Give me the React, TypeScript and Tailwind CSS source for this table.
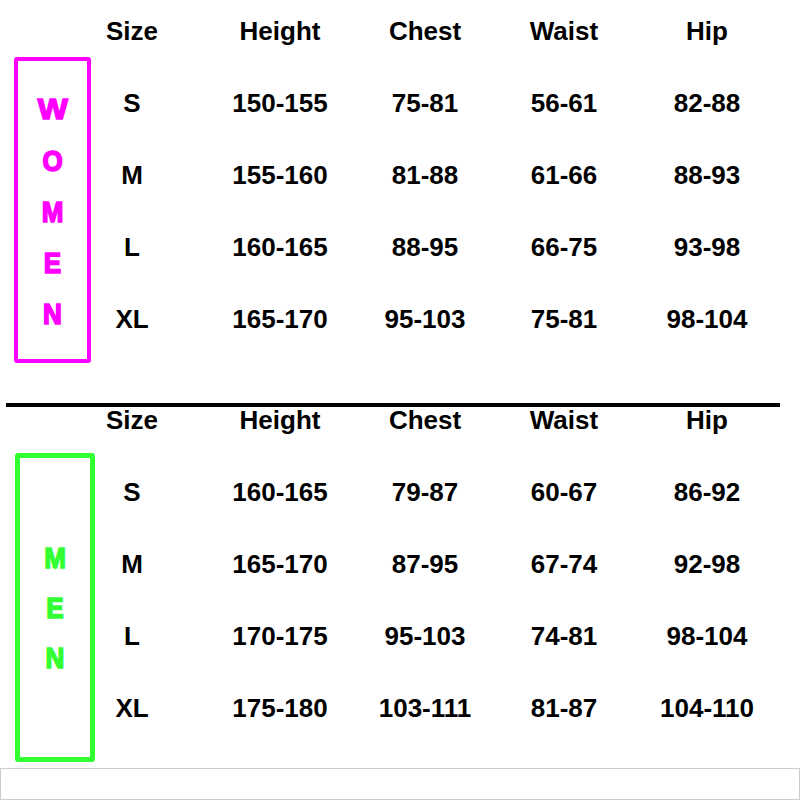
import React from "react";

type Row = [string, string, string, string, string];

const women: Row[] = [
  ["S", "150-155", "75-81", "56-61", "82-88"],
  ["M", "155-160", "81-88", "61-66", "88-93"],
  ["L", "160-165", "88-95", "66-75", "93-98"],
  ["XL", "165-170", "95-103", "75-81", "98-104"],
];

const men: Row[] = [
  ["S", "160-165", "79-87", "60-67", "86-92"],
  ["M", "165-170", "87-95", "67-74", "92-98"],
  ["L", "170-175", "95-103", "74-81", "98-104"],
  ["XL", "175-180", "103-111", "81-87", "104-110"],
];

const header: Row = ["Size", "Height", "Chest", "Waist", "Hip"];

function Cells({ r }: { r: Row }) {
  return (
    <>
      <div className="w-[64px] text-center whitespace-nowrap">{r[0]}</div>
      <div className="ml-[56px] w-[120px] text-center whitespace-nowrap">{r[1]}</div>
      <div className="ml-[25px] w-[120px] text-center whitespace-nowrap">{r[2]}</div>
      <div className="ml-[19px] w-[120px] text-center whitespace-nowrap">{r[3]}</div>
      <div className="ml-[23px] w-[120px] text-center whitespace-nowrap">{r[4]}</div>
    </>
  );
}

export default function App() {
  const font = { fontFamily: '"Liberation Sans", Arial, sans-serif' };
  return (
    <div className="w-[800px] h-[800px] bg-white text-black overflow-hidden" style={font}>
      {/* WOMEN */}
      <div className="flex h-[403px]">
        <div className="w-[100px] shrink-0">
          <div className="ml-[14px] mt-[57px] w-[77px] h-[306px] border-[4px] border-[#ff00ff] rounded-[3px] flex flex-col items-center pt-[23px] text-[#ff00ff] font-bold text-[26px] [-webkit-text-stroke:1.5px_#ff00ff]">
            <div className="h-[51px] flex items-center justify-center leading-none text-[29px] scale-x-[1.1]">W</div>
            {["O", "M", "E", "N"].map((l) => (
              <div key={l} className="h-[51px] flex items-center justify-center leading-none scale-y-[1.1]">
                {l}
              </div>
            ))}
          </div>
        </div>
        <div className="flex flex-col font-bold text-[26px] leading-none">
          <div className="h-[62px] flex items-center">
            <Cells r={header} />
          </div>
          <div className="mt-[5px]">
            {women.map((r) => (
              <div key={r[0]} className="h-[72px] flex items-center">
                <Cells r={r} />
              </div>
            ))}
          </div>
        </div>
      </div>

      {/* separator */}
      <div className="ml-[6px] w-[774px] h-[4px] bg-black" />

      {/* MEN */}
      <div className="flex h-[355px]">
        <div className="w-[100px] shrink-0">
          <div className="ml-[15px] mt-[46px] w-[80px] h-[309px] border-[5px] border-[#33ff33] rounded-[3px] flex flex-col items-center justify-center text-[#33ff33] font-bold text-[26px] [-webkit-text-stroke:1.5px_#33ff33]">
            {["M", "E", "N"].map((l) => (
              <div key={l} className="h-[50px] flex items-center justify-center leading-none scale-y-[1.15]">
                {l}
              </div>
            ))}
          </div>
        </div>
        <div className="flex flex-col font-bold text-[26px] leading-none">
          <div className="h-[26px] flex items-center">
            <Cells r={header} />
          </div>
          <div className="mt-[23px]">
            {men.map((r) => (
              <div key={r[0]} className="h-[72px] flex items-center">
                <Cells r={r} />
              </div>
            ))}
          </div>
        </div>
      </div>

      {/* bottom box */}
      <div className="mt-[6px] w-[800px] h-[32px] border border-[#cccccc]" />
    </div>
  );
}
